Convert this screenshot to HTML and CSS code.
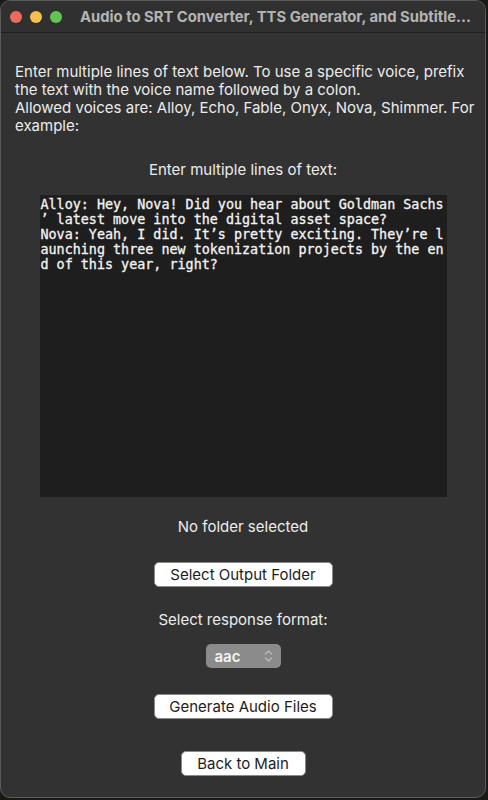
FILE: index.html
```html
<!DOCTYPE html>
<html>
<head>
<meta charset="utf-8">
<link rel="stylesheet" href="styles.css">
</head>
<body>
<div class="window">
  <div class="titlebar">
    <span class="light red"></span>
    <span class="light yellow"></span>
    <span class="light green"></span>
    <span class="title">Audio to SRT Converter, TTS Generator, and Subtitle...</span>
  </div>
  <div class="content">
    <p class="intro">Enter multiple lines of text below. To use a specific voice, prefix<br>the text with the voice name followed by a colon.<br>Allowed voices are: Alloy, Echo, Fable, Onyx, Nova, Shimmer. For<br>example:</p>
    <div class="label l-text">Enter multiple lines of text:</div>
    <div class="editor">Alloy: Hey, Nova! Did you hear about Goldman Sachs
’ latest move into the digital asset space?
Nova: Yeah, I did. It’s pretty exciting. They’re l
aunching three new tokenization projects by the en
d of this year, right?</div>
    <div class="label l-folder">No folder selected</div>
    <button class="btn b-folder">Select Output Folder</button>
    <div class="label l-format">Select response format:</div>
    <div class="select">
      <span>aac</span>
      <svg width="9" height="14" viewBox="0 0 9 14"><path d="M1.5 5 L4.5 2 L7.5 5 M1.5 9 L4.5 12 L7.5 9" fill="none" stroke="#bdbdbd" stroke-width="1.3" stroke-linecap="round" stroke-linejoin="round"/></svg>
    </div>
    <button class="btn b-gen">Generate Audio Files</button>
    <button class="btn b-back">Back to Main</button>
  </div>
</div>
</body>
</html>
```
FILE: styles.css
```css
html, body {
  margin: 0;
  padding: 0;
  background: #1b1916;
  width: 488px;
  height: 800px;
  overflow: hidden;
}
.window {
  width: 484px;
  height: 796px;
  background: #323232;
  border: 1px solid #5a5a5a;
  border-radius: 10px;
  overflow: hidden;
  font-family: Inter, "Liberation Sans", Arial, sans-serif;
  color: #e6e6e6;
  display: flex;
  flex-direction: column;
}
.titlebar {
  height: 31px;
  flex: none;
  background: #303030;
  border-bottom: 1px solid #1f1f1f;
  display: flex;
  align-items: center;
  padding-left: 9px;
}
.light {
  width: 12px;
  height: 12px;
  border-radius: 50%;
  margin-right: 8px;
}
.red { background: #ec6a5e; }
.yellow { background: #f4bf4f; }
.green { background: #61c554; }
.title {
  margin-left: 10px;
  font-weight: 700;
  font-size: 14.8px;
  color: #b4b4b4;
  white-space: nowrap;
}
.content {
  display: flex;
  flex-direction: column;
  align-items: center;
}
.intro {
  align-self: stretch;
  margin: 30px 0 0 14px;
  font-size: 15px;
  line-height: 18px;
  color: #ececec;
}
.label {
  font-size: 15px;
  line-height: 18px;
  color: #ececec;
}
.l-text { margin-top: 26px; }
.editor {
  margin-top: 16px;
  width: 407px;
  height: 302px;
  box-sizing: border-box;
  padding: 2px 0 0 1px;
  background: #1e1e1e;
  color: #f4f4f4;
  font-family: "DejaVu Sans Mono", monospace;
  font-size: 13.4px;
  line-height: 15px;
  white-space: pre;
  overflow: hidden;
  -webkit-text-stroke: 0.3px #f4f4f4;
}
.l-folder { margin-top: 21px; }
.btn {
  font-family: Inter, "Liberation Sans", Arial, sans-serif;
  font-size: 15px;
  color: #1c1c1c;
  background: #ffffff;
  border: 1px solid #8a8a8a;
  border-radius: 5px;
  height: 25px;
  padding: 0;
  display: flex;
  align-items: center;
  justify-content: center;
}
.b-folder { margin-top: 26px; width: 179px; }
.l-format { margin-top: 24px; }
.select {
  margin-top: 15px;
  width: 75px;
  height: 24px;
  box-sizing: border-box;
  border-radius: 5px;
  background: #8b8b8b;
  display: flex;
  align-items: center;
  justify-content: space-between;
  padding: 0 8px 0 9px;
  font-size: 15px;
  font-weight: 600;
  color: #f4f4f4;
}
.select svg { display: block; }
.b-gen { margin-top: 26px; width: 179px; }
.b-back { margin-top: 32px; width: 125px; }
```
